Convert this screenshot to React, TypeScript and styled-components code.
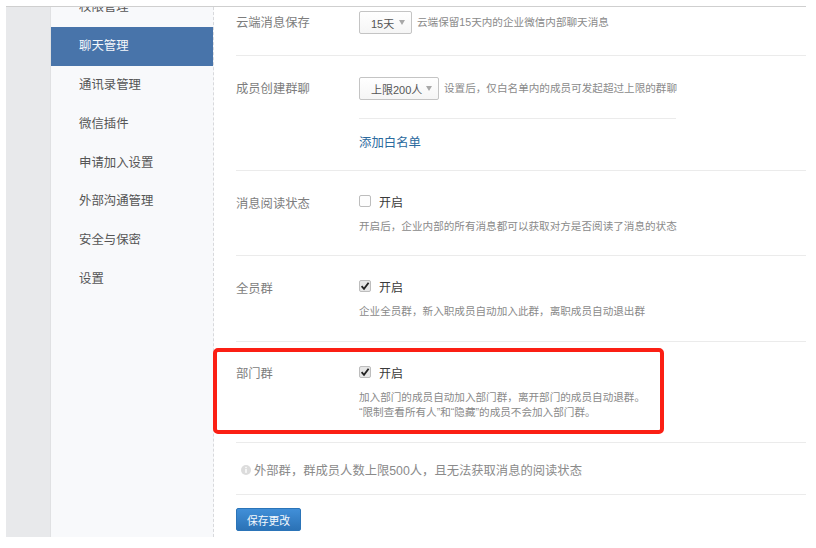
import { createGlobalStyle, styled } from 'styled-components';
import type { ReactNode } from 'react';

const GlobalStyle = createGlobalStyle`
  html, body {
    margin: 0;
    padding: 0;
    background: #fff;
  }
  body {
    font-family: "Liberation Sans", "Noto Sans CJK SC", sans-serif;
  }
`;

const navItems = ['权限管理', '聊天管理', '通讯录管理', '微信插件', '申请加入设置', '外部沟通管理', '安全与保密', '设置'];

const Page = styled.div`
  width: 816px;
  height: 548px;
  padding: 6px 10px 11px 6px;
  box-sizing: border-box;
  overflow: hidden;
`;

const Frame = styled.div`
  position: relative;
  display: flex;
  height: 531px;
  border-top: 1px solid #cfcfcf;
  box-sizing: border-box;
  overflow: hidden;
`;

const Gutter = styled.div`
  width: 45px;
  flex: none;
  background: #e8e9eb;
  border-right: 1px solid #e0e1e3;
  box-sizing: border-box;
`;

const Sidebar = styled.nav`
  width: 163px;
  flex: none;
  background: #f8f9fb;
  border-right: 1px dashed #d8d9dc;
  box-sizing: border-box;
  overflow: hidden;
`;

const NavList = styled.div`
  margin-top: -19px;
`;

const NavItem = styled.div<{ $active?: boolean }>`
  height: 38.9px;
  line-height: 38.9px;
  padding-left: 28px;
  font-size: 12.4px;
  color: ${({ $active }) => ($active ? '#f4f7fb' : '#555')};
  background: ${({ $active }) => ($active ? '#4874aa' : 'transparent')};
`;

const Main = styled.main`
  flex: 1;
  min-width: 0;
  padding-left: 22px;
`;

const Row = styled.section<{ $top: number; $height: number }>`
  display: grid;
  grid-template-columns: 123px 1fr;
  align-content: start;
  height: ${({ $height }) => $height}px;
  padding-top: ${({ $top }) => $top}px;
  box-sizing: border-box;
  border-bottom: 1px solid #ebebeb;
`;

const Label = styled.div<{ $line: number }>`
  font-size: 12.3px;
  line-height: ${({ $line }) => $line}px;
  color: #7d7d7d;
`;

const Inline = styled.div`
  display: flex;
  align-items: center;
  height: 23px;
`;

const SelectBox = styled.div<{ $width: number }>`
  display: flex;
  align-items: center;
  justify-content: space-between;
  width: ${({ $width }) => $width}px;
  height: 23px;
  padding: 0 6px 0 11px;
  margin-right: 5px;
  box-sizing: border-box;
  border: 1px solid #c4c4c4;
  border-radius: 2px;
  background: linear-gradient(#ffffff, #f5f5f5);
  font-size: 11px;
  color: #555;
`;

const Caret = styled.span`
  width: 0;
  height: 0;
  border-left: 3px solid transparent;
  border-right: 3px solid transparent;
  border-top: 5px solid #a8a8a8;
`;

const Hint = styled.span`
  font-size: 10.6px;
  line-height: 15px;
  color: #8a8a8a;
  white-space: nowrap;
`;

const InnerRule = styled.div`
  width: 317px;
  height: 1px;
  margin-top: 18px;
  background: #ebebeb;
`;

const AddLink = styled.a`
  display: block;
  margin-top: 15px;
  font-size: 12.4px;
  line-height: 18px;
  color: #2b6a9e;
`;

const CheckLine = styled.div`
  display: flex;
  align-items: center;
  gap: 8px;
  height: 14px;
  font-size: 12px;
  color: #3a3a3a;
`;

const Box = styled.span<{ $checked?: boolean }>`
  width: 12px;
  height: 12px;
  flex: none;
  box-sizing: border-box;
  border: 1px solid #bdbdbd;
  border-radius: 2px;
  background: ${({ $checked }) => ($checked ? '#e6e6e6' : '#fdfdfd')};
  display: flex;
  align-items: center;
  justify-content: center;
`;

const Descriptions = styled.div`
  display: flex;
  flex-direction: column;
  margin-top: 11px;
`;

const InfoRow = styled.section`
  height: 52px;
  padding-top: 18px;
  box-sizing: border-box;
  border-bottom: 1px solid #ebebeb;
`;

const InfoLine = styled.div`
  display: flex;
  align-items: center;
  gap: 3px;
  height: 18px;
  margin-left: 5px;
  font-size: 12.3px;
  color: #8a8a8a;
`;

const SaveButton = styled.button`
  display: block;
  width: 65px;
  height: 23px;
  margin-top: 13px;
  padding: 0;
  border: 1px solid #2b74b8;
  border-radius: 2px;
  background: linear-gradient(#418fd8, #2b72b6);
  color: #f4f8fc;
  font-family: inherit;
  font-size: 10.8px;
`;

const Highlight = styled.div`
  position: absolute;
  left: 207px;
  top: 341px;
  width: 451px;
  height: 86px;
  box-sizing: border-box;
  border: 4.5px solid #fb1f14;
  border-radius: 5px;
`;

function CheckMark() {
  return (
    <svg width="10" height="10" viewBox="0 0 10 10" aria-hidden="true">
      <path d="M1.6 5.2 L4 7.8 L8.6 1.8" fill="none" stroke="#222" strokeWidth="1.8" />
    </svg>
  );
}

function InfoIcon() {
  return (
    <svg width="10" height="10" viewBox="0 0 10 10" aria-hidden="true">
      <circle cx="5" cy="5" r="5" fill="#dcdcdc" />
      <rect x="4.3" y="1.8" width="1.4" height="1.3" fill="#fff" />
      <rect x="4.3" y="3.9" width="1.4" height="4" fill="#fff" />
    </svg>
  );
}

function Toggle({ checked, children }: { checked?: boolean; children: ReactNode }) {
  return (
    <CheckLine>
      <Box $checked={checked}>{checked && <CheckMark />}</Box>
      {children}
    </CheckLine>
  );
}

export default function App() {
  return (
    <Page>
      <GlobalStyle />
      <Frame>
        <Gutter />
        <Sidebar>
          <NavList>
            {navItems.map((item) => (
              <NavItem key={item} $active={item === '聊天管理'}>
                {item}
              </NavItem>
            ))}
          </NavList>
        </Sidebar>
        <Main>
          <Row $top={4} $height={49}>
            <Label $line={24}>云端消息保存</Label>
            <Inline>
              <SelectBox $width={53}>
                15天 <Caret />
              </SelectBox>
              <Hint>云端保留15天内的企业微信内部聊天消息</Hint>
            </Inline>
          </Row>
          <Row $top={21} $height={115}>
            <Label $line={24}>成员创建群聊</Label>
            <div>
              <Inline>
                <SelectBox $width={80}>
                  上限200人 <Caret />
                </SelectBox>
                <Hint>设置后，仅白名单内的成员可发起超过上限的群聊</Hint>
              </Inline>
              <InnerRule />
              <AddLink>添加白名单</AddLink>
            </div>
          </Row>
          <Row $top={23} $height={85}>
            <Label $line={20}>消息阅读状态</Label>
            <div>
              <Toggle>开启</Toggle>
              <Descriptions>
                <Hint>开启后，企业内部的所有消息都可以获取对方是否阅读了消息的状态</Hint>
              </Descriptions>
            </div>
          </Row>
          <Row $top={23} $height={86}>
            <Label $line={20}>全员群</Label>
            <div>
              <Toggle checked>开启</Toggle>
              <Descriptions>
                <Hint>企业全员群，新入职成员自动加入此群，离职成员自动退出群</Hint>
              </Descriptions>
            </div>
          </Row>
          <Row $top={23} $height={101}>
            <Label $line={18}>部门群</Label>
            <div>
              <Toggle checked>开启</Toggle>
              <Descriptions>
                <Hint>加入部门的成员自动加入部门群，离开部门的成员自动退群。</Hint>
                <Hint>“限制查看所有人”和“隐藏”的成员不会加入部门群。</Hint>
              </Descriptions>
            </div>
          </Row>
          <InfoRow>
            <InfoLine>
              <InfoIcon />
              外部群，群成员人数上限500人，且无法获取消息的阅读状态
            </InfoLine>
          </InfoRow>
          <SaveButton>保存更改</SaveButton>
        </Main>
        <Highlight />
      </Frame>
    </Page>
  );
}
